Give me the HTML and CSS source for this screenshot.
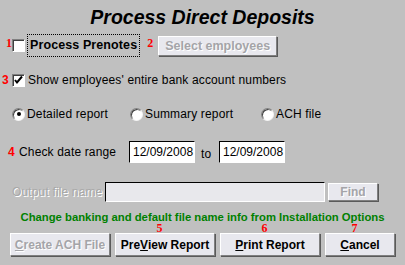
FILE: index.html
```html
<!DOCTYPE html>
<html lang="en">
<head>
  <meta charset="UTF-8" />
  <title>Process Direct Deposits</title>
  <link rel="stylesheet" href="styles.css">
</head>
<body>
  <div class="dialog">
    <h1 class="title">Process Direct Deposits</h1>

    <div class="row row-prenotes">
      <span class="num serif">1</span>
      <span class="check"></span>
      <span class="focus-label">Process Prenotes</span>
      <span class="num serif num-2">2</span>
      <button class="btn btn-select" disabled>Select employees</button>
    </div>

    <div class="row row-show">
      <span class="num sans num-3">3</span>
      <span class="check">
        <svg width="11" height="11" viewBox="0 0 11 11"><path d="M2 5 L4 7.5 L9 1.5" fill="none" stroke="#000" stroke-width="2"/></svg>
      </span>
      <span class="label">Show employees' entire bank account numbers</span>
    </div>

    <div class="row row-radios">
      <span class="radio-item radio-detailed"><span class="radio on"></span>Detailed report</span>
      <span class="radio-item radio-summary"><span class="radio"></span>Summary report</span>
      <span class="radio-item"><span class="radio"></span>ACH file</span>
    </div>

    <div class="row row-dates">
      <span class="num sans num-4">4</span>
      <span class="label date-label">Check date range</span>
      <input class="field date" type="text" value="12/09/2008">
      <span class="label to">to</span>
      <input class="field date" type="text" value="12/09/2008">
    </div>

    <div class="row row-output">
      <span class="label disabled-text">Output file name</span>
      <input class="field output" type="text" disabled>
      <button class="btn btn-find" disabled>Find</button>
    </div>

    <p class="note">Change banking and default file name info from Installation Options</p>

    <div class="actions">
      <div class="action">
        <span class="num serif"></span>
        <button class="btn btn-create" disabled><u>C</u>reate ACH File</button>
      </div>
      <div class="action">
        <span class="num serif">5</span>
        <button class="btn btn-preview">Pre<u>V</u>iew Report</button>
      </div>
      <div class="action">
        <span class="num serif">6</span>
        <button class="btn btn-print"><u>P</u>rint Report</button>
      </div>
      <div class="action">
        <span class="num serif">7</span>
        <button class="btn btn-cancel"><u>C</u>ancel</button>
      </div>
    </div>
  </div>
</body>
</html>
```

FILE: styles.css
```css
body {
  margin: 0;
  background: #c0c0c0;
  font-family: "Liberation Sans", Arial, sans-serif;
  font-size: 12px;
  color: #000;
}
.dialog {
  width: 405px;
  height: 265px;
  overflow: hidden;
}
.title {
  margin: 0;
  padding-top: 6px;
  height: 28px;
  text-align: center;
  font-size: 19.5px;
  font-weight: bold;
  font-style: italic;
  line-height: 22px;
}
.row {
  display: flex;
  align-items: center;
}
.num {
  color: #f00;
  font-weight: bold;
  font-size: 12px;
}
.serif {
  font-family: "Liberation Serif", "Times New Roman", serif;
}
.sans {
  font-family: "Liberation Sans", Arial, sans-serif;
}
.row-prenotes {
  height: 23px;
  padding-left: 6px;
}
.row-prenotes .num {
  align-self: flex-start;
  margin-top: 2px;
  width: 6px;
}
.check {
  width: 11px;
  height: 11px;
  background: #fff;
  border: 1px solid;
  border-color: #808080 #fff #fff #808080;
  box-shadow: inset 1px 1px 0 #404040;
  display: flex;
  align-items: center;
  justify-content: center;
}
.focus-label {
  margin-left: 2px;
  padding: 3px 2px 4px 2px;
  border: 1px dotted #000;
  font-weight: bold;
  font-size: 12.5px;
  letter-spacing: 0.1px;
}
.num-2 {
  margin-left: 7px;
  margin-right: 5px;
}
.btn {
  font-family: "Liberation Sans", Arial, sans-serif;
  font-weight: bold;
  font-size: 12px;
  background: #e8e8ee;
  color: #000;
  border: 1px solid;
  border-color: #fff #808080 #808080 #fff;
  box-shadow: 1px 1px 0 #5a5a5a;
  padding: 0;
  height: 22px;
}
.btn u {
  text-decoration: underline;
}
.btn:disabled {
  color: #a4a4a8;
  text-shadow: 1px 1px 0 #fff;
}
.btn-select {
  width: 119px;
  height: 20px;
  font-size: 12.5px;
}
.row-show {
  margin-top: 15px;
  height: 16px;
  padding-left: 2px;
}
.num-3 {
  width: 10px;
  font-size: 12px;
}
.label {
  margin-left: 3px;
  letter-spacing: 0.15px;
}
.row-radios {
  margin-top: 19px;
  height: 14px;
  padding-left: 12px;
}
.radio-item {
  display: flex;
  align-items: center;
  gap: 2px;
  letter-spacing: 0.15px;
}
.radio-detailed {
  width: 118px;
}
.radio-summary {
  width: 131px;
}
.radio {
  width: 11px;
  height: 11px;
  border-radius: 50%;
  background: #fff;
  border: 1px solid;
  border-color: #808080 #f4f4f4 #f4f4f4 #808080;
  box-shadow: inset 1px 1px 0 #404040;
  display: flex;
  align-items: center;
  justify-content: center;
}
.radio.on::after {
  content: "";
  width: 4px;
  height: 4px;
  border-radius: 50%;
  background: #000;
}
.row-dates {
  margin-top: 20px;
  height: 22px;
  padding-left: 8px;
}
.num-4 {
  width: 8px;
}
.date-label {
  margin-left: 3px;
  width: 110px;
}
.field {
  font-family: "Liberation Sans", Arial, sans-serif;
  font-size: 12px;
  box-sizing: border-box;
  border: 1px solid;
  border-color: #000 #fff #fff #000;
  outline: none;
  margin: 0;
}
.date {
  width: 66px;
  height: 22px;
  padding: 0 0 0 3px;
  background: #fff;
  color: #000;
}
.to {
  width: 18px;
  margin-left: 6px;
  margin-top: 4px;
}
.row-output {
  margin-top: 19px;
  height: 20px;
  padding-left: 9px;
}
.disabled-text {
  color: #a8a8a8;
  text-shadow: 1px 1px 0 #fff;
  width: 93px;
}
.output {
  width: 220px;
  height: 20px;
  background: #e8e8ec;
}
.btn-find {
  margin-left: 3px;
  width: 50px;
  height: 18px;
}
.note {
  margin: 10px 0 0 0;
  text-align: center;
  color: #008000;
  font-weight: bold;
  font-size: 11.3px;
  line-height: 11px;
}
.actions {
  display: flex;
  gap: 5px;
  padding-left: 10px;
}
.action {
  display: flex;
  flex-direction: column;
  align-items: center;
}
.action .num {
  line-height: 9px;
  height: 9px;
  margin-top: 1px;
  padding-right: 11px;
}
.btn-create,
.btn-preview,
.btn-print {
  width: 100px;
  height: 23px;
}
.btn-cancel {
  width: 70px;
  height: 23px;
}
```
